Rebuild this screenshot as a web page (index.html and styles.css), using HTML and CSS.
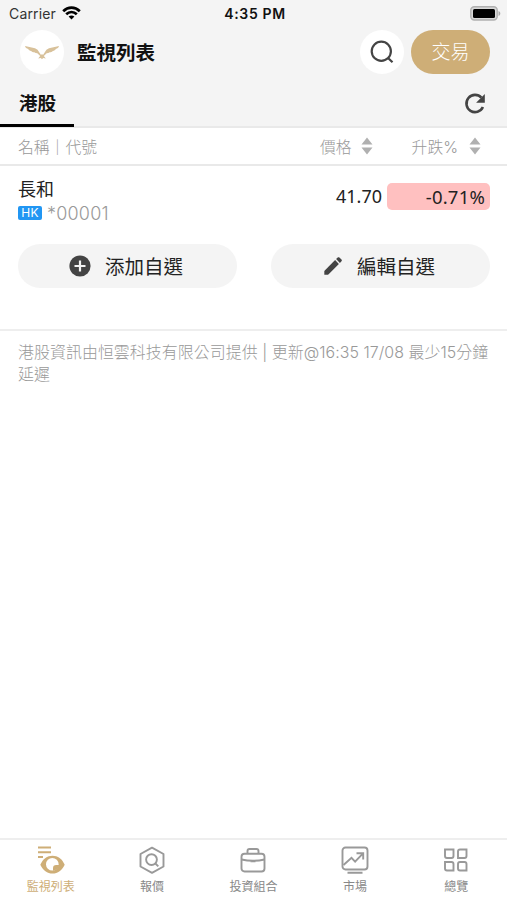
FILE: index.html
```html
<!DOCTYPE html>
<html lang="zh-Hant">
<head>
    <meta charset="UTF-8">
    <meta name="viewport" content="width=device-width, initial-scale=1.0">
    <title>監視列表</title>
    <link rel="stylesheet" href="styles.css">
</head>
<body>
    <div class="top">
        <div class="status-bar">
            <div class="carrier">
                <span>Carrier</span>
                <svg width="19" height="14" viewBox="0 0 19 14" fill="none" stroke="#000" stroke-width="2.7">
                    <path d="M1.2 5.2C6 .5 13 .5 17.8 5.2M4.2 8.3c3.1-2.9 7.5-2.9 10.6 0"/>
                    <path d="M6.6 10.6c1.8-1.5 4-1.5 5.8 0L9.5 13.5z" fill="#000" stroke="none"/>
                </svg>
            </div>
            <span class="time">4:35 PM</span>
            <svg class="battery" width="31" height="15" viewBox="0 0 31 15">
                <rect x=".8" y=".8" width="26.4" height="13.2" rx="3.5" fill="#d8d8d8" stroke="#b0b0b0" stroke-width="1.4"/>
                <rect x="3" y="3" width="22" height="9" rx="1.5" fill="#000"/>
                <path d="M28.5 5c2.4.7 2.4 4.300 0 5z" fill="#aaa"/>
            </svg>
        </div>

        <header class="header">
            <div class="logo">
                <svg width="34" height="15" viewBox="0 0 34 15" fill="#d8c19a">
                    <path d="M0 1 10 3.200q3 1 4.200 4l1.800 2.800 1-1 1 1 1.800-2.800q1.200-3 4.200-4L34 1c-.5 1.700-1.500 2.600-3.200 3-.5 1.100-1.500 1.700-2.900 1.900-.8.900-1.800 1.300-3.200 1.400-.8.700-1.800 1-3 1L18.800 11l2 2.600-2.600-.7L17 14.200l-1.200-1.300-2.600.7 2-2.600-2.900-2.700c-1.200 0-2.200-.3-3-1-1.400-.1-2.400-.5-3.200-1.400-1.400-.2-2.400-.8-2.900-1.900C1.500 3.600.5 2.700 0 1z"/>
                </svg>
            </div>
            <h1>監視列表</h1>
            <button class="search">
                <svg width="24" height="24" viewBox="0 0 24 24" fill="none" stroke="#444" stroke-width="2.200">
                    <circle cx="11.300" cy="11.200" r="9.600"/>
                    <path d="m18 18 4.500 4.300"/>
                </svg>
            </button>
            <button class="trade">交易</button>
        </header>

        <div class="tabs">
            <div class="tab">港股</div>
            <svg class="refresh" width="22" height="22" viewBox="0 0 22 22">
                <path d="M17.400 4.700A8.600 8.600 0 1 0 18.900 14" fill="none" stroke="#444" stroke-width="2.600"/>
                <path d="M20.800 1v8.700h-8.700z" fill="#444"/>
            </svg>
        </div>
    </div>

    <main>
        <div class="list-head">
            <span class="col-name">名稱｜代號</span>
            <span class="col-price">價格
                <svg width="12" height="18" viewBox="0 0 12 18" fill="#b0b0b0"><path d="M6 .5 11.500 7.500H.5zM6 17.500.5 10.500h11z"/></svg>
            </span>
            <span class="col-change">升跌%
                <svg width="12" height="18" viewBox="0 0 12 18" fill="#b0b0b0"><path d="M6 .5 11.500 7.500H.5zM6 17.500.5 10.500h11z"/></svg>
            </span>
        </div>

        <div class="stock">
            <div class="stock-info">
                <div class="stock-name">長和</div>
                <div class="stock-code"><span class="market">HK</span>*00001</div>
            </div>
            <span class="price">41.70</span>
            <span class="change">-0.71%</span>
        </div>

        <div class="actions">
            <button class="action">
                <svg width="22" height="22" viewBox="0 0 22 22">
                    <circle cx="11" cy="11" r="10.600" fill="#444"/>
                    <path d="M11 5.500v11M5.500 11h11" stroke="#f4f4f4" stroke-width="2.200"/>
                </svg>
                <span>添加自選</span>
            </button>
            <button class="action">
                <svg width="20" height="20" viewBox="0 0 20 20" fill="#444">
                    <path d="M1.300 18.700v-3.800L12.100 4.100l3.800 3.800L5.100 18.700z"/>
                    <path d="m13.100 3.100 1.600-1.600c.5-.5 1.200-.5 1.700 0l2.100 2.100c.5.5.5 1.200 0 1.700l-1.600 1.600z"/>
                </svg>
                <span>編輯自選</span>
            </button>
        </div>

        <p class="source">港股資訊由恒雲科技有限公司提供 | 更新@16:35 17/08 最少15分鐘延遲</p>
    </main>

    <nav class="nav">
        <a class="nav-item active">
            <svg width="28" height="28" viewBox="0 0 28 28">
                <path d="M1 1.500h13M1 6.200h13M1 10.900h5" stroke="#ceae77" stroke-width="2"/>
                <path d="M3.300 18.700C6 13 10.200 9.800 15.500 9.800S25 13 27.700 18.700C25 24.300 20.800 27.600 15.500 27.600S6 24.300 3.300 18.700z" fill="#ceae77"/>
                <circle cx="15.300" cy="18.200" r="6.300" fill="#fff"/>
                <path d="M16 24.800v-2.600q0-3.200 3.200-3.200H22.400q-.8 4.800-6.400 5.800z" fill="#ceae77"/>
            </svg>
            <span>監視列表</span>
        </a>
        <a class="nav-item">
            <svg width="28" height="28" viewBox="0 0 28 28" fill="none" stroke="#999" stroke-width="1.900">
                <path d="M14 1.700 25.500 8v12.500L14 26.800 2.500 20.500V8z" stroke-linejoin="round"/>
                <circle cx="13.500" cy="13.600" r="5.400"/>
                <path d="m17.400 17.500 2.900 2.900"/>
            </svg>
            <span>報價</span>
        </a>
        <a class="nav-item">
            <svg width="28" height="28" viewBox="0 0 28 28" fill="none" stroke="#999" stroke-width="1.900">
                <rect x="2.500" y="7.800" width="23" height="17.700" rx="3"/>
                <path d="M8.500 7.800V5q0-2 2-2h7q2 0 2 2v2.800M2.500 13.500q11.500 2.600 23 0M11.500 15.300h5"/>
            </svg>
            <span>投資組合</span>
        </a>
        <a class="nav-item">
            <svg width="28" height="28" viewBox="0 0 28 28" fill="none" stroke="#999" stroke-width="1.900">
                <rect x="1.500" y="1.500" width="25" height="22" rx="3"/>
                <path d="m2.500 19 8-7.200 3.600 3.800 7.700-8M15.500 7.200h6.700v6.300M6.500 26.700h15"/>
            </svg>
            <span>市場</span>
        </a>
        <a class="nav-item">
            <svg width="28" height="28" viewBox="0 0 28 28" fill="none" stroke="#999" stroke-width="1.900">
                <path d="M3 3.500H11.500v6.500q0 2-2 2h-4.500q-2 0-2-2zM16 5.500q0-2 2-2h6.500v6.500q0 2-2 2H16zM3 16h6.500q2 0 2 2v6.500h-6.500q-2 0-2-2zM18 16h4.500q2 0 2 2v6.500H18q-2 0-2-2v-4.500q0-2 2-2z"/>
            </svg>
            <span>總覽</span>
        </a>
    </nav>
</body>
</html>
```
FILE: styles.css
```css
* {
    box-sizing: border-box;
}
body {
    margin: 0;
    height: 900px;
    display: flex;
    flex-direction: column;
    background: #fff;
    color: #222;
    font-family: Inter, "Noto Sans CJK TC", sans-serif;
}
button {
    border: none;
    padding: 0;
    font-family: inherit;
}
svg {
    display: block;
    flex: none;
}
.top {
    background: #f4f4f4;
    border-bottom: 2px solid #e9e9e9;
    height: 128px;
}
.status-bar {
    display: grid;
    grid-template-columns: 1fr auto 1fr;
    align-items: center;
    height: 28px;
    padding: 0 6px 2px 9px;
    font-size: 14px;
    letter-spacing: 0.15px;
    color: #333;
}
.carrier {
    display: flex;
    align-items: center;
    gap: 6px;
}
.time {
    font-weight: 600;
    letter-spacing: 0.65px;
    color: #111;
}
.battery {
    justify-self: end;
}
.header {
    display: flex;
    align-items: center;
    height: 48px;
    padding: 0 17px 0 20px;
}
.logo,
.search {
    display: flex;
    align-items: center;
    justify-content: center;
    width: 44px;
    height: 44px;
    border-radius: 50%;
    background: #fff;
}
.header h1 {
    margin: 0 auto 0 13px;
    padding-bottom: 1px;
    font-size: 19.5px;
    font-weight: 700;
    color: #111;
}
.trade {
    width: 79px;
    height: 44px;
    margin-left: 7px;
    padding-bottom: 3px;
    border-radius: 22px;
    background: #ceae77;
    color: #fff;
    font-size: 19px;
    font-weight: 300;
}
.tabs {
    display: flex;
    justify-content: space-between;
    align-items: center;
    height: 51px;
    padding-right: 21px;
}
.tab {
    width: 74px;
    height: 51px;
    padding-left: 19px;
    line-height: 55px;
    border-bottom: 3px solid #000;
    font-size: 18.5px;
    font-weight: 700;
    color: #111;
}
.refresh {
    margin-top: 4px;
}
main {
    flex: 1;
}
.list-head {
    display: flex;
    align-items: center;
    height: 38px;
    padding: 0 26px 0 18px;
    border-bottom: 2px solid #e9e9e9;
    font-size: 15.8px;
    font-weight: 300;
    color: #999;
}
.col-name {
    flex: 1;
}
.col-price,
.col-change {
    display: flex;
    align-items: center;
    gap: 9px;
}
.col-change {
    gap: 11px;
    margin-left: 39px;
}
.stock {
    display: flex;
    align-items: center;
    height: 60px;
    padding: 0 17px 0 18px;
}
.stock-info {
    flex: 1;
    padding-top: 10px;
}
.stock-name {
    font-size: 18px;
    line-height: 24px;
}
.stock-code {
    display: flex;
    align-items: center;
    gap: 5px;
    font-size: 18px;
    font-weight: 300;
    letter-spacing: 0.2px;
    line-height: 23px;
    color: #999;
}
.market {
    width: 24px;
    height: 14px;
    border-radius: 2px;
    background: #2196f3;
    color: #fff;
    font-size: 12px;
    font-weight: 400;
    line-height: 14px;
    text-align: center;
}
.price,
.change {
    font-family: "Noto Sans", sans-serif;
    font-size: 18px;
}
.change {
    width: 103px;
    height: 27px;
    margin-left: 5px;
    padding-right: 5px;
    border-radius: 5px;
    background: #ffc0c0;
    font-size: 18.5px;
    letter-spacing: 0.2px;
    line-height: 27px;
    text-align: right;
}
.actions {
    display: grid;
    grid-template-columns: 1fr 1fr;
    gap: 34px;
    padding: 18px 17px 41px 18px;
    border-bottom: 2px solid #eee;
}
.action {
    display: flex;
    align-items: center;
    justify-content: center;
    gap: 14px;
    height: 44px;
    padding-right: 3px;
    border-radius: 22px;
    background: #f4f4f4;
    color: #222;
    font-size: 19.5px;
}
.action span {
    padding-bottom: 2px;
}
.source {
    margin: 0;
    padding: 11px 17px 0 18px;
    font-size: 15.95px;
    font-weight: 300;
    letter-spacing: 0.04px;
    line-height: 22px;
    color: #999;
}
.nav {
    display: grid;
    grid-template-columns: repeat(5, 1fr);
    height: 62px;
    border-top: 2px solid #eee;
}
.nav-item {
    display: flex;
    flex-direction: column;
    align-items: center;
    padding-top: 6px;
    font-size: 12px;
    line-height: 25px;
    color: #888;
}
.nav-item.active {
    color: #ceae77;
}
```
